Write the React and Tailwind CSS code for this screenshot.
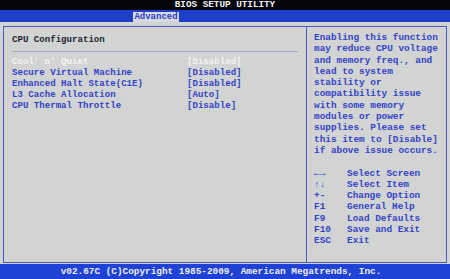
import React from "react";

const items = [
  ["Cool' n' Quiet", "[Disabled]", true],
  ["Secure Virtual Machine", "[Disabled]", false],
  ["Enhanced Halt State(C1E)", "[Disabled]", false],
  ["L3 Cache Allocation", "[Auto]", false],
  ["CPU Thermal Throttle", "[Disable]", false],
];

const help = [
  "Enabling this function",
  "may reduce CPU voltage",
  "and memory freq., and",
  "lead to system",
  "stability or",
  "compatibility issue",
  "with some memory",
  "modules or power",
  "supplies. Please set",
  "this item to [Disable]",
  "if above issue occurs.",
];

const keys = [
  ["←→", "Select Screen"],
  ["↑↓", "Select Item"],
  ["+-", "Change Option"],
  ["F1", "General Help"],
  ["F9", "Load Defaults"],
  ["F10", "Save and Exit"],
  ["ESC", "Exit"],
];

export default function App() {
  return (
    <div
      className="w-[450px] h-[279px] bg-[#d2d3d3] flex flex-col overflow-hidden font-bold"
      style={{ fontFamily: '"Liberation Mono", "DejaVu Sans Mono", monospace' }}
    >
      <div className="h-[10px] bg-[#05060c] flex justify-center items-center text-[9.3px] leading-[10px] text-[#f2f2f2]">
        BIOS SETUP UTILITY
      </div>
      <div className="h-[12px] bg-[#1f3fcb] flex items-end">
        <div className="ml-[133px] w-[46px] h-[10px] bg-[#d6dae0] text-[#2f3fc6] text-[9px] leading-[10px] flex justify-center">
          Advanced
        </div>
      </div>
      <div className="h-[242px] px-[3px] pt-[4px] pb-[1px] flex">
        <div className="flex-1 flex border border-[#4858c8]">
          <div className="w-[302px] pl-[8px] pr-[8px] pt-[7px] text-[9.1px]">
            <div className="leading-[12px] text-[#1c1f2a]">CPU Configuration</div>
            <div className="mt-[5px] h-px bg-[#a4acc8]" />
            <div className="mt-[4px] flex flex-col">
              {items.map(([label, value, sel]) => (
                <div
                  key={label}
                  className={
                    "flex leading-[11.1px] " +
                    (sel ? "text-[#f4f4f4]" : "text-[#3242c8]")
                  }
                >
                  <span className="w-[175px] whitespace-pre">{label}</span>
                  <span>{value}</span>
                </div>
              ))}
            </div>
          </div>
          <div className="flex-1 border-l border-[#4858c8] pl-[7px] pt-[5px] text-[9.4px] text-[#3242c8]">
            {help.map((l) => (
              <div key={l} className="leading-[11.3px] whitespace-pre">
                {l}
              </div>
            ))}
            <div className="h-[11.3px]" />
            {keys.map(([k, v]) => (
              <div key={v} className="flex leading-[11.3px]">
                <span className="w-[33px]">{k}</span>
                <span>{v}</span>
              </div>
            ))}
          </div>
        </div>
      </div>
      <div className="h-[15px] bg-[#1f42d4] flex justify-center pr-[8px] text-[9.4px] leading-[15px] text-[#eceef6]">
        v02.67C (C)Copyright 1985-2009, American Megatrends, Inc.
      </div>
    </div>
  );
}
